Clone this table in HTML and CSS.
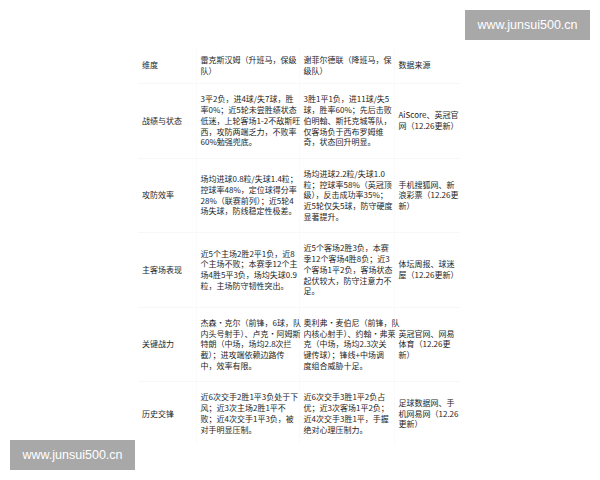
FILE: index.html
```html
<!DOCTYPE html>
<html lang="zh-CN">
<head>
<meta charset="utf-8">
<title>雷克斯汉姆 vs 谢菲尔德联</title>
<link rel="stylesheet" href="styles.css">
</head>
<body>
<div class="page">
  <table class="cmp">
    <colgroup>
      <col class="c1"><col class="c2"><col class="c3"><col class="c4">
    </colgroup>
    <thead>
      <tr>
        <th>维度</th>
        <th>雷克斯汉姆（升班马，保级<br>队）</th>
        <th>谢菲尔德联（降班马，保<br>级队）</th>
        <th>数据来源</th>
      </tr>
    </thead>
    <tbody>
      <tr>
        <td>战绩与状态</td>
        <td>3平2负，进4球/失7球，胜<br>率0%；近5轮未尝胜绩状态<br>低迷，上轮客场1-2不敌斯旺<br>西，攻防两端乏力，不败率<br>60%勉强兜底。</td>
        <td>3胜1平1负，进11球/失5<br>球，胜率60%；先后击败<br>伯明翰、斯托克城等队，<br>仅客场负于西布罗姆维<br>奇，状态回升明显。</td>
        <td>AiScore、英冠官<br>网（12.26更新）</td>
      </tr>
      <tr>
        <td>攻防效率</td>
        <td>场均进球0.8粒/失球1.4粒；<br>控球率48%，定位球得分率<br>28%（联赛前列）；近5轮4<br>场失球，防线稳定性极差。</td>
        <td>场均进球2.2粒/失球1.0<br>粒；控球率58%（英冠顶<br>级），反击成功率35%；<br>近5轮仅失5球，防守硬度<br>显著提升。</td>
        <td>手机搜狐网、新<br>浪彩票（12.26更<br>新）</td>
      </tr>
      <tr>
        <td>主客场表现</td>
        <td>近5个主场2胜2平1负，近8<br>个主场不败；本赛季12个主<br>场4胜5平3负，场均失球0.9<br>粒，主场防守韧性突出。</td>
        <td>近5个客场2胜3负，本赛<br>季12个客场4胜8负；近3<br>个客场1平2负，客场状态<br>起伏较大，防守注意力不<br>足。</td>
        <td>体坛周报、球迷<br>屋（12.26更新）</td>
      </tr>
      <tr>
        <td>关键战力</td>
        <td>杰森·克尔（前锋，6球，队<br>内头号射手）、卢克·阿姆斯<br>特朗（中场，场均2.8次拦<br>截）；进攻端依赖边路传<br>中，效率有限。</td>
        <td>奥利弗·麦伯尼（前锋，队<br>内核心射手）、约翰·弗莱<br>克（中场，场均2.3次关<br>键传球）；锋线+中场调<br>度组合威胁十足。</td>
        <td>英冠官网、网易<br>体育（12.26更<br>新）</td>
      </tr>
      <tr>
        <td>历史交锋</td>
        <td>近6次交手2胜1平3负处于下<br>风；近3次主场2胜1平不<br>败；近4次交手1平3负，被<br>对手明显压制。</td>
        <td>近6次交手3胜1平2负占<br>优；近3次客场1平2负；<br>近4次交手3胜1平，手握<br>绝对心理压制力。</td>
        <td>足球数据网、手<br>机网易网（12.26<br>更新）</td>
      </tr>
    </tbody>
  </table>
  <div class="mark mark-top">www.junsui500.cn</div>
  <div class="mark mark-bottom">www.junsui500.cn</div>
</div>
</body>
</html>
```
FILE: styles.css
```css
html, body {
  margin: 0;
  padding: 0;
  background: #ffffff;
}

.page {
  position: relative;
  width: 600px;
  height: 480px;
  overflow: hidden;
  padding-top: 48px;
  box-sizing: border-box;
}

.cmp {
  margin-left: 138px;
  border-collapse: collapse;
  table-layout: fixed;
  width: 322px;
  font-family: "Noto Sans CJK SC", "Noto Sans", sans-serif;
  font-size: 8px;
  line-height: 10.7px;
  color: #1e1e1e;
}

.c1 { width: 58px; }
.c2 { width: 103px; }
.c3 { width: 95px; }
.c4 { width: 66px; }

.cmp th,
.cmp td {
  text-align: left;
  font-weight: normal;
  vertical-align: middle;
  white-space: nowrap;
  padding: 10px 4px;
  border-left: 1px solid #fafafa;
}

.cmp th:first-child,
.cmp td:first-child {
  border-left: none;
}

.cmp th {
  padding-top: 7px;
  padding-bottom: 7px;
}

.cmp tbody tr {
  border-top: 1px solid #f7f7f7;
}

.mark {
  position: absolute;
  width: 125px;
  height: 30px;
  background: #a8a8a8;
  color: #ffffff;
  font-family: "Liberation Sans", Arial, sans-serif;
  font-size: 12.5px;
  line-height: 30px;
  text-align: center;
}

.mark-top {
  left: 465px;
  top: 10px;
}

.mark-bottom {
  left: 10px;
  top: 440px;
}
```
